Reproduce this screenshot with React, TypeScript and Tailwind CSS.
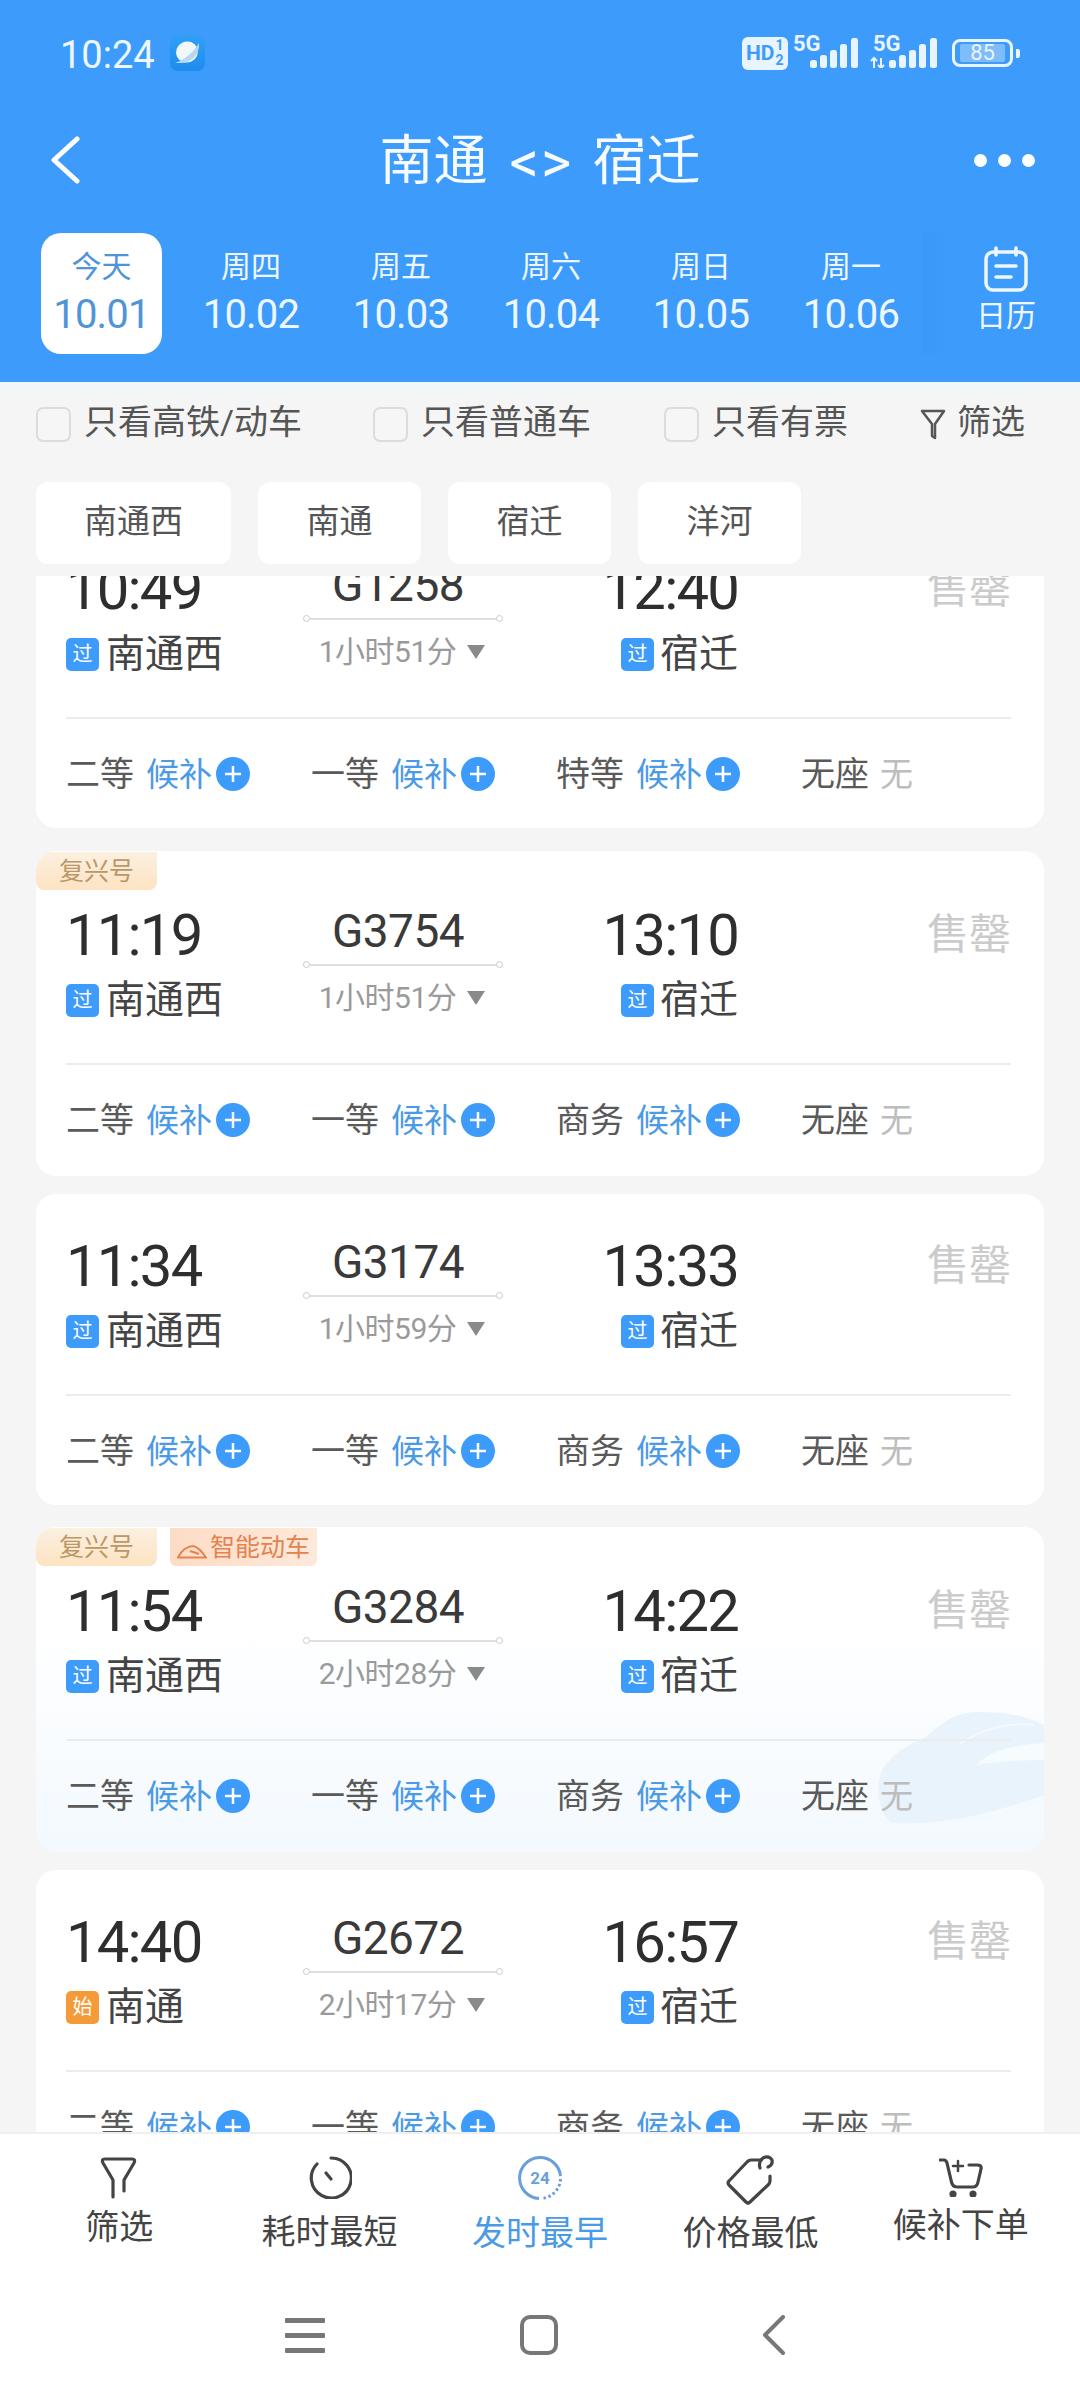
import React from "react";

const FONT = { fontFamily: '"Roboto","Noto Sans CJK SC",sans-serif' };

type Train = {
  dep: string; no: string; arr: string; dur: string; from: string; fromTag: string;
  cls: string; gap: string; fu?: boolean; smart?: boolean; bg?: boolean;
};

const trains: Train[] = [
  { dep: "10:49", no: "G1258", arr: "12:40", dur: "1小时51分", from: "南通西", fromTag: "过", cls: "特等", gap: "mt-[-59px]" },
  { dep: "11:19", no: "G3754", arr: "13:10", dur: "1小时51分", from: "南通西", fromTag: "过", cls: "商务", gap: "mt-[23px]", fu: true },
  { dep: "11:34", no: "G3174", arr: "13:33", dur: "1小时59分", from: "南通西", fromTag: "过", cls: "商务", gap: "mt-[18px]" },
  { dep: "11:54", no: "G3284", arr: "14:22", dur: "2小时28分", from: "南通西", fromTag: "过", cls: "商务", gap: "mt-[22px]", fu: true, smart: true, bg: true },
  { dep: "14:40", no: "G2672", arr: "16:57", dur: "2小时17分", from: "南通", fromTag: "始", cls: "商务", gap: "mt-[18px]" },
];

const days = [
  ["今天", "10.01"], ["周四", "10.02"], ["周五", "10.03"], ["周六", "10.04"], ["周日", "10.05"], ["周一", "10.06"],
];

function Signal({ arrows }: { arrows?: boolean }) {
  const x = arrows ? 19 : 0;
  return (
    <svg width={arrows ? 67 : 48} height="30" viewBox={`0 0 ${arrows ? 67 : 48} 30`} fill="#e8f4ff" className="block">
      {arrows && (
        <g stroke="#e8f4ff" strokeWidth="2" fill="none">
          <path d="M4 20v10M1 23l3-3 3 3" />
          <path d="M11 20v10M8 27l3 3 3-3" />
        </g>
      )}
      <rect x={x} y="22" width="7" height="8" rx="2.5" />
      <rect x={x + 10} y="17" width="7" height="13" rx="2.5" />
      <rect x={x + 20} y="12" width="7" height="18" rx="2.5" />
      <rect x={x + 30} y="6" width="7" height="24" rx="2.5" />
      <rect x={x + 41} y="0" width="7" height="30" rx="2.5" />
    </svg>
  );
}

function StatusBar() {
  return (
    <div className="flex h-[106px] items-center pl-[60px] pr-[60px]">
      <span className="pt-[3px] text-[38px] leading-none text-[#edf7ff]">10:24</span>
      <span className="ml-[15px] flex h-[35px] w-[35px] items-center justify-center rounded-[8px] bg-gradient-to-b from-[#2fa0f6] to-[#1f8bef]">
        <svg width="32" height="32" viewBox="0 0 32 32">
          <ellipse cx="16" cy="15" rx="11" ry="10.5" fill="#f2f7fb" transform="rotate(-25 16 15)" />
          <path d="M4 26 C13 23 23 15 28 6 C29 15 23 25 11 26 Z" fill="#b6d8f4" />
        </svg>
      </span>
      <div className="ml-auto flex items-center">
        <span className="flex h-[33px] w-[46px] items-center rounded-[6px] bg-[#e8f4ff] pl-[4px] text-[21px] font-bold leading-none text-[#3d9bfb]">
          HD
          <span className="ml-[1px] flex flex-col text-[14px] leading-[15px]">
            <span>1</span>
            <span>2</span>
          </span>
        </span>
        <span className="relative ml-[22px] flex h-[30px] w-[48px]">
          <span className="absolute left-[-17px] top-[-5px] text-[22px] font-bold leading-none text-[#e8f4ff]">5G</span>
          <Signal />
        </span>
        <span className="relative ml-[12px] flex h-[30px] w-[67px]">
          <span className="absolute left-[3px] top-[-5px] text-[22px] font-bold leading-none text-[#e8f4ff]">5G</span>
          <Signal arrows />
        </span>
        <span className="ml-[15px] flex items-center">
          <span className="flex h-[28px] w-[61px] items-center justify-center rounded-[8px] border-[3px] border-[#e8f4ff] text-[22px] leading-none text-[#e8f4ff]">
            <span className="flex h-[18px] w-[45px] items-center justify-center rounded-[2px] bg-[#7ebcfb]">85</span>
          </span>
          <span className="ml-[3px] h-[9px] w-[4px] rounded-r-[2px] bg-[#e8f4ff]" />
        </span>
      </div>
    </div>
  );
}

function Header() {
  return (
    <header className="h-[382px] shrink-0 bg-[#3d9bfb] text-white">
      <StatusBar />
      <div className="relative flex h-[108px] items-center justify-center">
        <svg className="absolute left-[50px] top-[30px]" width="30" height="48" viewBox="0 0 30 48" fill="none" stroke="#fff" strokeWidth="5" strokeLinecap="round" strokeLinejoin="round">
          <path d="M27 3 L4 24 L27 45" />
        </svg>
        <div className="flex items-center pt-[4px] text-[#f7fbff]">
          <span className="text-[54px] leading-none">南通</span>
          <span className="ml-[22px] text-[58px] leading-none tracking-[2px]">&lt;&gt;</span>
          <span className="ml-[19px] text-[54px] leading-none">宿迁</span>
        </div>
        <div className="absolute right-[45px] top-[48px] flex gap-[11px]">
          <span className="h-[13px] w-[13px] rounded-full bg-white" />
          <span className="h-[13px] w-[13px] rounded-full bg-white" />
          <span className="h-[13px] w-[13px] rounded-full bg-white" />
        </div>
      </div>
      <div className="flex pl-[41px] pt-[19px]">
        {days.map(([a, b], i) => (
          <div key={b} className={i === 0 ? "mr-[29px] flex h-[121px] w-[121px] shrink-0 flex-col items-center rounded-[20px] bg-white pt-[14px] text-[#4f94d6]" : "flex h-[121px] w-[150px] shrink-0 flex-col items-center pt-[14px] pr-[30px] text-[#eef7ff]"}>
            <span className="text-[30px] leading-[40px]">{a}</span>
            <span className="mt-[5px] text-[40px] leading-[46px] tracking-[-0.8px]">{b}</span>
          </div>
        ))}
        <div className="ml-[-18px] flex h-[121px] w-[157px] shrink-0 flex-col items-center bg-gradient-to-r from-[#3b98f8] to-[#3d9bfb] to-[24px] pl-[9px] pt-[13px] text-[#eef7ff]">
          <svg width="44" height="46" viewBox="0 0 44 46" fill="none" stroke="#eef7ff" strokeWidth="3.5" strokeLinecap="round">
            <rect x="2" y="6" width="40" height="38" rx="7" />
            <path d="M12 2v7M32 2v7M12 20h20M12 31h15" />
          </svg>
          <span className="mt-[6px] text-[30px] leading-[36px]">日历</span>
        </div>
      </div>
    </header>
  );
}

function Check({ label, w }: { label: string; w: string }) {
  return (
    <div className={`flex items-center ${w}`}>
      <span className="h-[35px] w-[35px] rounded-[7px] border-[2px] border-[#dcdcdc] bg-[#f6f6f6]" />
      <span className="ml-[13px] pb-[4px] text-[34px] leading-none text-[#555]">{label}</span>
    </div>
  );
}

function Filters() {
  return (
    <div className="shrink-0 bg-gradient-to-b from-[#eff8f9] to-[#f5f5f5] to-[20px] pl-[36px]">
      <div className="flex h-[84px] items-center">
        <Check label="只看高铁/动车" w="w-[337px]" />
        <Check label="只看普通车" w="w-[291px]" />
        <Check label="只看有票" w="w-[256px]" />
        <svg width="26" height="32" viewBox="0 0 26 32" fill="none" stroke="#555" strokeWidth="2.5" strokeLinejoin="round">
          <path d="M2 3h22l-9 13v14l-3-2V16z" />
        </svg>
        <span className="ml-[11px] pb-[4px] text-[34px] leading-none text-[#555]">筛选</span>
      </div>
      <div className="mt-[16px] flex gap-[27px]">
        {[["南通西", "w-[195px]"], ["南通", "w-[163px]"], ["宿迁", "w-[163px]"], ["洋河", "w-[163px]"]].map(([t, w]) => (
          <div key={t} className={`flex h-[82px] items-center justify-center rounded-[12px] bg-white pb-[3px] text-[33px] text-[#555] ${w}`}>{t}</div>
        ))}
      </div>
      <div className="h-[12px]" />
    </div>
  );
}

function PlusDot() {
  return (
    <svg width="34" height="34" viewBox="0 0 34 34" className="ml-[4px] shrink-0">
      <circle cx="17" cy="17" r="17" fill="#3d9bfb" />
      <path d="M17 9v16M9 17h16" stroke="#fff" strokeWidth="2.5" />
    </svg>
  );
}

function Seat({ name }: { name: string }) {
  return (
    <div className="flex w-[245px] items-center">
      <span className="text-[34px] leading-none text-[#5a5a5a]">{name}</span>
      <span className="ml-[12px] text-[33px] leading-none text-[#4a9ae6]">候补</span>
      <PlusDot />
    </div>
  );
}

function Tag({ t }: { t: string }) {
  return (
    <span className={`flex h-[33px] w-[33px] shrink-0 items-center justify-center rounded-[5px] text-[20px] leading-none text-white ${t === "始" ? "bg-[#f59a38]" : "bg-[#3d9bfb]"}`}>{t}</span>
  );
}

function Card({ t }: { t: Train }) {
  const badged = t.fu;
  return (
    <article className={`relative shrink-0 overflow-hidden rounded-[20px] ${t.bg ? "bg-gradient-to-b from-white from-[30%] to-[#f3f9fe]" : "bg-white"} ${t.gap} ${badged ? "pt-[54px] pb-[36px]" : "pt-[42px] pb-[34px]"} pl-[30px] pr-[33px]`}>
      {t.bg && (
        <svg className="absolute bottom-[22px] right-0" width="170" height="130" viewBox="0 0 170 130">
          <path d="M18 123 C2 110 2 85 8 70 C22 50 35 45 52 37 C70 20 85 12 102 12 C130 12 150 15 170 25 V95 C130 110 70 126 18 123 Z" fill="#e9f3fc" />
          <path d="M102 65 C115 52 135 45 170 43 V60 C145 60 120 62 102 65 Z" fill="#f6fbfe" />
          <path d="M85 45 C105 30 130 22 160 25" stroke="#f3f9fe" strokeWidth="2" fill="none" />
        </svg>
      )}
      {t.fu && (
        <div className="absolute left-0 top-[1px] flex gap-[13px]">
          <span className="flex h-[38px] w-[121px] items-center justify-center rounded-b-[8px] rounded-tl-[8px] bg-gradient-to-b from-[#fbf0e1] to-[#fde3c1] text-[25px] leading-none text-[#bb9768]">复兴号</span>
          {t.smart && (
            <span className="flex h-[38px] w-[147px] items-center justify-center rounded-b-[6px] bg-gradient-to-r from-[#fddcc6] to-[#fde9da] text-[25px] leading-none text-[#e5824f]">
              <svg width="30" height="15" viewBox="0 0 30 15" fill="none" stroke="#e5824f" strokeWidth="2" className="mr-[3px] mt-[8px]">
                <path d="M1 13.5 C4 7 10 2 16 2 C21 3 26 9 29 13.5 Z" />
                <path d="M13 7l9 3" />
              </svg>
              智能动车
            </span>
          )}
        </div>
      )}
      <div className="relative flex h-[62px]">
        <div className="flex w-[237px] items-center pb-[2px] text-[58px] leading-none tracking-[-1.8px] text-[#2e2e2e]">{t.dep}</div>
        <div className="relative h-[62px] w-[200px]">
          <div className="h-[54px] pr-[10px] text-center text-[46px] leading-[52px] tracking-[-0.5px] text-[#3a3a3a]">{t.no}</div>
          <div className="relative mt-[5px] h-[2px] bg-[#e0e0e0]">
            <span className="absolute left-0 top-[-3px] h-[7px] w-[7px] rounded-full border border-[#ccc] bg-white" />
            <span className="absolute right-0 top-[-3px] h-[7px] w-[7px] rounded-full border border-[#ccc] bg-white" />
          </div>
        </div>
        <div className="flex w-[235px] items-center justify-end pb-[2px] text-[58px] leading-none tracking-[-1.8px] text-[#2e2e2e]">{t.arr}</div>
        <div className="flex-1 pt-[7px] text-right text-[42px] leading-[46px] text-[#cbcbcb]">售罄</div>
      </div>
      <div className="relative mt-[1px] flex h-[64px] items-center">
        <div className="flex w-[237px] items-center">
          <Tag t={t.fromTag} />
          <span className="ml-[7px] text-[39px] leading-none text-[#444]">{t.from}</span>
        </div>
        <div className="flex w-[200px] items-center justify-center pb-[5px] pr-[2px]">
          <span className="text-[30px] leading-none tracking-[-0.5px] text-[#9a9a9a]">{t.dur}</span>
          <span className="ml-[11px] h-0 w-0 border-x-[9px] border-t-[14px] border-x-transparent border-t-[#8a8a8a]" />
        </div>
        <div className="flex w-[235px] items-center justify-end">
          <Tag t="过" />
          <span className="ml-[6px] text-[39px] leading-none text-[#444]">宿迁</span>
        </div>
      </div>
      <div className="relative mt-[31px] h-[2px] bg-[#ececec]" />
      <div className="relative mt-[35px] flex h-[40px] items-center">
        <Seat name="二等" />
        <Seat name="一等" />
        <Seat name={t.cls} />
        <div className="flex items-center">
          <span className="text-[34px] leading-none text-[#5a5a5a]">无座</span>
          <span className="ml-[11px] text-[33px] leading-none text-[#bdbdbd]">无</span>
        </div>
      </div>
    </article>
  );
}

const S = { fill: "none", stroke: "#444", strokeWidth: 3.2, strokeLinecap: "round" as const, strokeLinejoin: "round" as const };

const tabs = [
  {
    label: "筛选", color: "text-[#444]", top: "mt-[3px]", box: "h-[48px]",
    icon: <svg width="38" height="44" viewBox="0 0 38 44" {...S}><path d="M13 41 V24 L3 7 Q1 3 5 3 H32 Q36 3 34 7 L24 24 V35" /></svg>,
  },
  {
    label: "耗时最短", color: "text-[#444]", top: "mt-[10px]", box: "h-[46px]",
    icon: <svg width="44" height="44" viewBox="0 0 44 44" {...S}><path d="M23 3 A20 20 0 1 1 9 9" /><path d="M18 18 L23 24" /></svg>,
  },
  {
    label: "发时最早", color: "text-[#4a9ae6]", top: "mt-[10px]", box: "h-[47px]",
    icon: (
      <svg width="46" height="46" viewBox="0 0 46 46" fill="none">
        <path d="M22 43.5 A20.5 20.5 0 1 1 43.5 21" stroke="#6a9fdc" strokeWidth="3" />
        <path d="M43.5 24 A20.5 20.5 0 0 1 24 43.5" stroke="#6a9fdc" strokeWidth="3" strokeDasharray="2.5 2.5" />
        <text x="23" y="29" textAnchor="middle" fontSize="17" fontWeight="700" fill="#6a9fdc" fontFamily="Roboto">24</text>
      </svg>
    ),
  },
  {
    label: "价格最低", color: "text-[#444]", top: "mt-[6px]", box: "h-[51px]",
    icon: <svg width="50" height="52" viewBox="0 0 50 52" {...S}><path d="M36 6 H26 Q24 6 22 8 L4 27 Q2 29 4 31 L21 48 Q23 50 25 48 L43 31 Q45 29 45 27 V22" /><path d="M35 14 Q33 8 38 4 Q44 1 47 6 Q48 11 43 13" /></svg>,
  },
  {
    label: "候补下单", color: "text-[#444]", top: "mt-[3px]", box: "h-[46px]",
    icon: <svg width="44" height="40" viewBox="0 0 44 40" {...S}><path d="M1 3 H5 Q7 3 8 6 L12 23 Q13 30 18 30 H34 Q38 30 39 25 L42 12 Q43 8 38 8 H30" /><path d="M19 4 V14 M14 9 H24" strokeWidth="2.5" /><circle cx="14" cy="37" r="2" fill="#444" /><circle cx="34" cy="37" r="2" fill="#444" /></svg>,
  },
];

function BottomBar() {
  return (
    <footer className="relative h-[268px] shrink-0 border-t-[2px] border-[#efefef] bg-white">
      <div className="grid grid-cols-5 px-[14px] pt-[20px]">
        {tabs.map((t) => (
          <div key={t.label} className="flex flex-col items-center">
            <div className={`flex items-center justify-center ${t.box}`}>{t.icon}</div>
            <span className={`text-[34px] leading-[44px] ${t.color} ${t.top}`}>{t.label}</span>
          </div>
        ))}
      </div>
      <div className="absolute bottom-[45px] left-[285px] flex items-center">
        <span className="flex w-[40px] flex-col gap-[10px]">
          <span className="h-[5px] rounded-[1px] bg-[#777]" />
          <span className="h-[5px] rounded-[1px] bg-[#777]" />
          <span className="h-[5px] rounded-[1px] bg-[#777]" />
        </span>
        <span className="ml-[195px] h-[40px] w-[38px] rounded-[10px] border-[4px] border-[#777]" />
        <svg className="ml-[203px]" width="25" height="40" viewBox="0 0 25 40" fill="none" stroke="#777" strokeWidth="4" strokeLinecap="round" strokeLinejoin="round">
          <path d="M22 2 L4 20 L22 38" />
        </svg>
      </div>
    </footer>
  );
}

export default function App() {
  return (
    <div className="flex h-[2400px] w-[1080px] flex-col overflow-hidden bg-[#f5f5f5]" style={FONT}>
      <Header />
      <Filters />
      <main className="flex min-h-0 flex-1 flex-col overflow-hidden px-[36px]">
        {trains.map((t) => (
          <Card key={t.no} t={t} />
        ))}
      </main>
      <BottomBar />
    </div>
  );
}
